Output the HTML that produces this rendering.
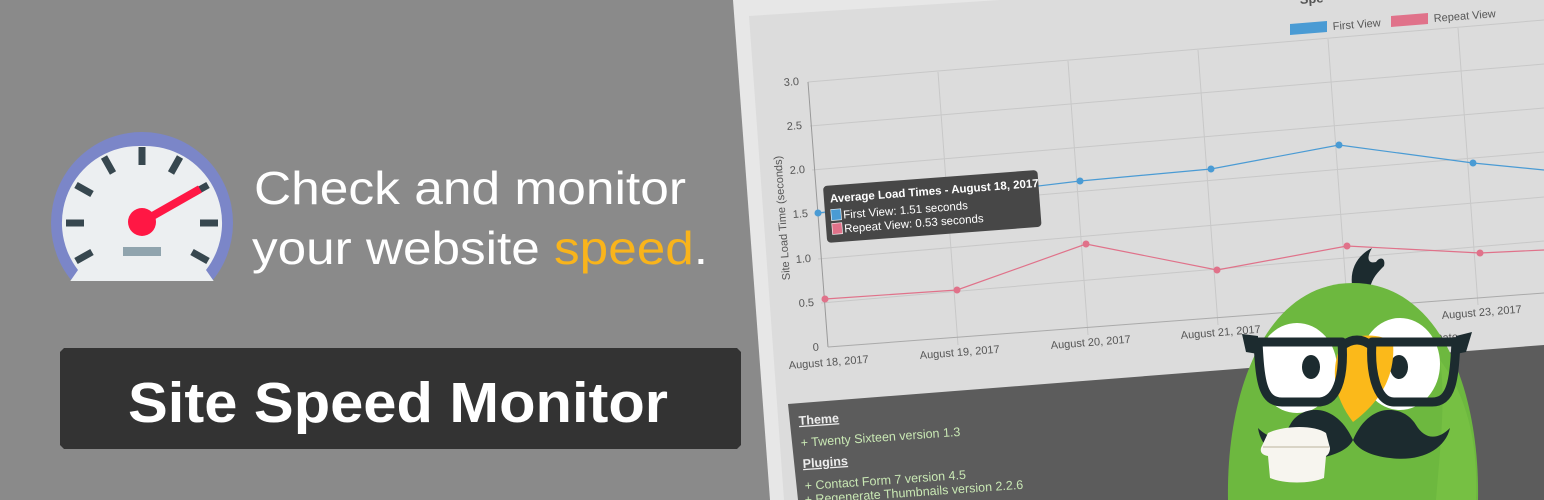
<!DOCTYPE html>
<html><head><meta charset="utf-8"><style>
html,body{margin:0;padding:0;background:#8a8a8a;}
svg{display:block;font-family:"Liberation Sans",sans-serif;}
</style></head><body>
<svg width="1544" height="500" viewBox="0 0 1544 500" xmlns="http://www.w3.org/2000/svg">
<rect width="1544" height="500" fill="#8a8a8a"/>
<defs><clipPath id="gc"><rect x="0" y="0" width="300" height="281"/></clipPath></defs>
<g clip-path="url(#gc)">
<circle cx="142" cy="223" r="91" fill="#7b86c8"/>
<path d="M142 146 A77 77 0 0 1 206 270 L220 290 L64 290 L78 270 A77 77 0 0 1 142 146Z" fill="#eceff1"/>
</g>
<g stroke="#37474f" stroke-width="7">
<line x1="66" y1="223" x2="84" y2="223"/><line x1="200" y1="223" x2="218" y2="223"/>
<line x1="142" y1="147" x2="142" y2="165"/>
<line x1="76" y1="185" x2="92" y2="194"/><line x1="208" y1="185" x2="192" y2="194"/>
<line x1="104" y1="157" x2="113" y2="173"/><line x1="180" y1="157" x2="171" y2="173"/>
<line x1="76" y1="261" x2="92" y2="252"/><line x1="208" y1="261" x2="192" y2="252"/>
</g>
<line x1="142" y1="222" x2="200" y2="189" stroke="#ff1744" stroke-width="8"/>
<circle cx="142" cy="222" r="14" fill="#ff1744"/>
<rect x="123" y="247" width="38" height="9" fill="#90a4ae"/>
<text x="254" y="204" font-size="46" fill="#fff" textLength="432" lengthAdjust="spacingAndGlyphs">Check and monitor</text>
<text x="252" y="264" font-size="46" fill="#fff" textLength="456" lengthAdjust="spacingAndGlyphs">your website <tspan fill="#f9b41b">speed</tspan>.</text>
<path d="M64 348 H737 L741 352 V445 L737 449 H64 L60 445 V352Z" fill="#333"/>
<text x="128" y="422" font-size="57" font-weight="bold" fill="#fff" textLength="540" lengthAdjust="spacingAndGlyphs">Site Speed Monitor</text>
<polygon points="733,0 1544,0 1544,500 770,500" fill="#e7e7e7"/>
<polygon points="749,16 1000,0 1544,0 1544,500 784,500" fill="#dcdcdc"/>
<polygon points="788,404 1544,345 1544,500 798,500" fill="#5c5c5c"/>
<text x="1300" y="4" font-size="13" font-weight="bold" fill="#555" transform="rotate(-4.5 1300 4)">Spe</text>
<g stroke="#c8c8c8" stroke-width="1">
<line x1="808" y1="82" x2="1544" y2="20"/>
<line x1="810" y1="126" x2="1544" y2="64"/>
<line x1="812" y1="170" x2="1544" y2="108"/>
<line x1="815" y1="214" x2="1544" y2="152"/>
<line x1="818" y1="259" x2="1544" y2="197"/>
<line x1="821" y1="303" x2="1544" y2="241"/>
<line x1="938" y1="72" x2="958" y2="345"/>
<line x1="1068" y1="61" x2="1088" y2="335"/>
<line x1="1198" y1="50" x2="1218" y2="325"/>
<line x1="1328" y1="39" x2="1348" y2="315"/>
<line x1="1458" y1="28" x2="1478" y2="305"/>
</g>
<line x1="808" y1="82" x2="828" y2="347" stroke="#999"/>
<line x1="828" y1="347" x2="1544" y2="293" stroke="#aaa"/>
<g font-size="11" fill="#555">
<text x="784" y="86" transform="rotate(-4 784 86)">3.0</text>
<text x="787" y="130" transform="rotate(-4 787 130)">2.5</text>
<text x="790" y="174" transform="rotate(-4 790 174)">2.0</text>
<text x="793" y="218" transform="rotate(-4 793 218)">1.5</text>
<text x="796" y="263" transform="rotate(-4 796 263)">1.0</text>
<text x="799" y="307" transform="rotate(-4 799 307)">0.5</text>
<text x="813" y="351" transform="rotate(-4 813 351)">0</text>
<text x="789" y="369" transform="rotate(-4.5 789 369)">August 18, 2017</text>
<text x="920" y="359" transform="rotate(-4.5 920 359)">August 19, 2017</text>
<text x="1051" y="349" transform="rotate(-4.5 1051 349)">August 20, 2017</text>
<text x="1181" y="339" transform="rotate(-4.5 1181 339)">August 21, 2017</text>
<text x="1442" y="319" transform="rotate(-4.5 1442 319)">August 23, 2017</text>
<text x="1435" y="342" transform="rotate(-4.5 1435 342)">Date</text>
<text x="790" y="280" transform="rotate(-94 790 280)">Site Load Time (seconds)</text>
<text x="1333" y="30" transform="rotate(-4.5 1333 30)">First View</text>
<text x="1434" y="22" transform="rotate(-4.5 1434 22)">Repeat View</text>
</g>
<polygon points="1290,24 1327,21 1327,32 1290,35" fill="#4a9bd4"/>
<polygon points="1391,16 1428,13 1428,24 1391,27" fill="#e0728a"/>
<polyline points="818,213 947,197 1080,181 1211,169 1339,145 1473,163 1544,170" fill="none" stroke="#4a9bd4" stroke-width="1.2"/>
<polyline points="825,299 957,290 1086,244 1217,270 1347,246 1480,253 1544,250" fill="none" stroke="#e0728a" stroke-width="1.2"/>
<g fill="#4a9bd4"><circle cx="818" cy="213" r="3.5"/><circle cx="1080" cy="181" r="3.5"/><circle cx="1211" cy="169" r="3.5"/><circle cx="1339" cy="145" r="3.5"/><circle cx="1473" cy="163" r="3.5"/></g>
<g fill="#e0728a"><circle cx="825" cy="299" r="3.5"/><circle cx="957" cy="290" r="3.5"/><circle cx="1086" cy="244" r="3.5"/><circle cx="1217" cy="270" r="3.5"/><circle cx="1347" cy="246" r="3.5"/><circle cx="1480" cy="253" r="3.5"/></g>
<g transform="rotate(-4.3 824 200)">
<rect x="824" y="186" width="215" height="57" rx="4" fill="#474747"/>
<text x="830" y="203" font-size="11.5" font-weight="bold" fill="#fff">Average Load Times - August 18, 2017</text>
<rect x="830" y="210" width="10" height="11" fill="#4a9bd4" stroke="#fff" stroke-width="0.6"/>
<text x="842" y="220" font-size="11.5" fill="#fff">First View: 1.51 seconds</text>
<rect x="830" y="224" width="10" height="11" fill="#e0728a" stroke="#fff" stroke-width="0.6"/>
<text x="842" y="234" font-size="11.5" fill="#fff">Repeat View: 0.53 seconds</text>
</g>
<g font-size="12.5" fill="#c9e8b4">
<text x="799" y="425" font-weight="bold" fill="#eee" text-decoration="underline" transform="rotate(-4 799 425)">Theme</text>
<text x="801" y="447" transform="rotate(-4 801 447)">+ Twenty Sixteen version 1.3</text>
<text x="803" y="468" font-weight="bold" fill="#eee" text-decoration="underline" transform="rotate(-4 803 468)">Plugins</text>
<text x="805" y="490" transform="rotate(-4 805 490)">+ Contact Form 7 version 4.5</text>
<text x="805" y="504" transform="rotate(-4 805 504)">+ Regenerate Thumbnails version 2.2.6</text>
</g>
<path d="M1352 285 C1350 268 1358 255 1372 248 C1366 258 1368 264 1376 262 C1380 256 1386 258 1384 266 C1378 272 1372 278 1370 288Z" fill="#1c2b2f"/>
<path d="M1353 283 C1440 283 1480 390 1478 500 L1228 500 C1226 390 1266 283 1353 283Z" fill="#6db83f"/>
<path d="M1440 360 C1470 400 1478 450 1476 500 L1436 500 C1440 450 1446 400 1440 360Z" fill="#76c043"/>
<ellipse cx="1297" cy="368" rx="40" ry="45" fill="#fff"/>
<ellipse cx="1400" cy="364" rx="40" ry="46" fill="#fff"/>
<ellipse cx="1311" cy="367" rx="9" ry="12" fill="#1c2b2f"/>
<ellipse cx="1399" cy="367" rx="9" ry="12" fill="#1c2b2f"/>
<path d="M1342 343 C1355 333 1382 333 1393 343 C1396 380 1376 405 1353 422 C1336 400 1328 372 1342 343Z" fill="#fbb91a"/>
<g fill="none" stroke="#1c2b2f" stroke-width="9" stroke-linejoin="round">
<path d="M1258 342 H1342 C1344 370 1340 400 1320 402 H1282 C1262 402 1260 380 1258 342Z"/>
<path d="M1372 342 H1456 C1454 380 1452 402 1432 402 H1394 C1376 402 1370 370 1372 342Z"/>
<path d="M1342 346 C1352 338 1362 338 1372 346"/>
</g>
<path d="M1242 334 L1258 336 L1258 354 L1246 352Z M1472 332 L1456 336 L1456 354 L1466 352Z" fill="#1c2b2f"/>
<path d="M1353 440 C1335 400 1300 405 1290 425 C1282 440 1270 440 1258 428 C1262 455 1290 465 1320 458 C1335 455 1348 450 1353 440 C1358 450 1372 456 1390 458 C1420 462 1445 450 1450 428 C1438 440 1425 440 1416 425 C1404 405 1370 400 1353 440Z" fill="#1c2b2f"/>
<path d="M1268 433 C1285 425 1315 425 1326 433 L1330 448 C1330 452 1328 455 1326 456 L1324 478 C1310 484 1284 484 1270 478 L1268 456 C1262 455 1260 452 1261 448Z" fill="#f7f5ef"/>
<line x1="1263" y1="447" x2="1329" y2="447" stroke="#cfc9b8" stroke-width="1.5"/>
</svg>
</body></html>
